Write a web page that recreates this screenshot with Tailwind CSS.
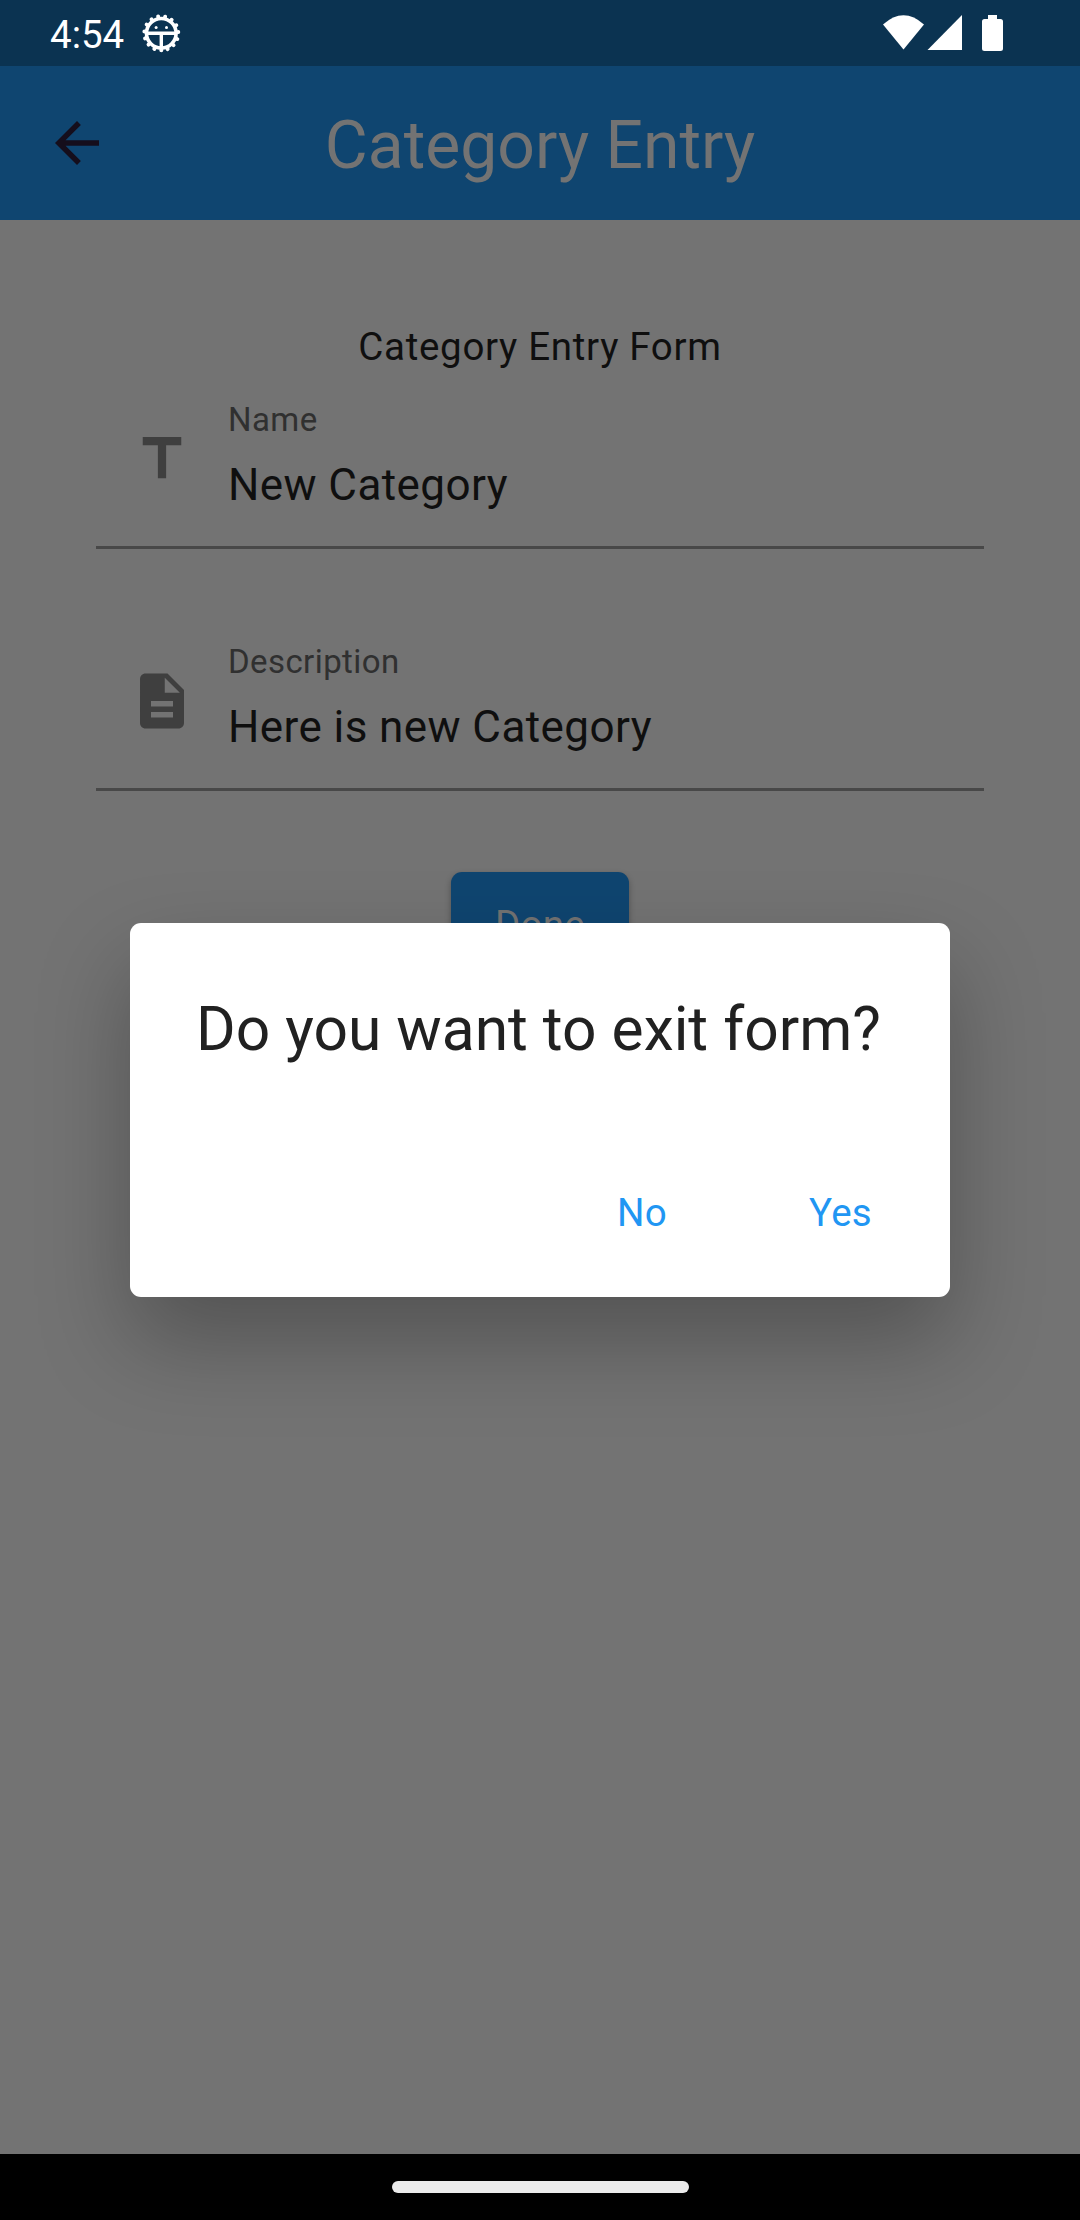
<!DOCTYPE html>
<html lang="en">
<head>
<meta charset="utf-8">
<title>Category Entry</title>
<script src="https://cdn.jsdelivr.net/npm/@tailwindcss/browser@4"></script>
</head>
<body class="bg-black font-['Roboto',sans-serif]">
<div class="relative flex h-[2220px] w-[1080px] flex-col overflow-hidden bg-[#737373]">
  <!-- Status bar -->
  <div class="flex h-[66px] shrink-0 items-center bg-[#0b3351] pl-[50px] text-white">
    <span class="w-[91px] pt-[4px] text-[38.5px] leading-[62px]">4:54</span>
    <svg class="h-[40px] w-[40px]" viewBox="-20.300 -20.300 40 40" fill="none" stroke="#fff">
      <circle r="17" stroke-width="4" stroke-linecap="round" stroke-dasharray="0.01 7.111" transform="rotate(90)"/>
      <circle r="14.800" stroke-width="3.600"/>
      <path d="M-14 0H14M0 0V15" stroke-width="3.400"/>
      <circle cx="-5.200" cy="-5.800" r="1.500" fill="#fff" stroke="none"/>
      <circle cx="5.200" cy="-5.800" r="1.500" fill="#fff" stroke="none"/>
    </svg>
    <svg class="ml-[702px] h-[36px] w-[122px]" viewBox="883 15 122 36" fill="#fff">
      <path d="M883 24.500Q903.500 6 924 24.500L903.500 49.500Z"/>
      <path d="M927.500 50L962 15V50Z"/>
      <path d="M988 15h9v4h3.500a2.500 2.500 0 0 1 2.500 2.500v27a2.500 2.500 0 0 1-2.500 2.500h-16a2.500 2.500 0 0 1-2.500-2.500v-27a2.500 2.500 0 0 1 2.500-2.500h3.500z"/>
    </svg>
  </div>
  <!-- App bar -->
  <header class="flex h-[154px] shrink-0 items-center bg-[#0f4570] px-[44px]">
    <svg class="h-[66px] w-[66px]" viewBox="0 0 24 24" fill="#150e1c"><path d="M20 11H7.830l5.590-5.590L12 4l-8 8 8 8 1.410-1.410L7.830 13H20z"/></svg>
    <h1 class="mr-[66px] flex-1 pt-[6px] text-center text-[66px] leading-[78px] text-[#737373]">Category Entry</h1>
  </header>
  <!-- Form -->
  <main class="flex flex-1 flex-col items-center px-[96px] pt-[103px]">
    <h2 class="h-[48px] text-[38.5px] leading-[48px] tracking-[0.6875px] text-[#0f0f0f]">Category Entry Form</h2>
    <div class="flex h-[178px] w-full border-b-[3px] border-[#484848] pl-[33px]">
      <svg class="mt-[55px] h-[66px] w-[66px] shrink-0" viewBox="0 0 24 24" fill="#3f3f3f"><path d="M5 4v3h5.500v12h3V7H19V4z"/></svg>
      <div class="ml-[33px] flex flex-col">
        <label class="mt-[29px] text-[33px] leading-[40px] tracking-[0.4125px] text-[#303030]">Name</label>
        <span class="mt-[19px] text-[44px] leading-[52px] tracking-[0.4125px] text-[#0f0f0f]">New Category</span>
      </div>
    </div>
    <div class="mt-[64px] flex h-[178px] w-full border-b-[3px] border-[#484848] pl-[33px]">
      <svg class="mt-[55px] h-[66px] w-[66px] shrink-0" viewBox="0 0 24 24" fill="#3f3f3f"><path d="M14 2H6c-1.100 0-1.990.9-1.990 2L4 20c0 1.100.890 2 1.990 2H18c1.100 0 2-.9 2-2V8l-6-6zm2 16H8v-2h8v2zm0-4H8v-2h8v2zm-3-5V3.500L18.500 9H13z"/></svg>
      <div class="ml-[33px] flex flex-col">
        <label class="mt-[29px] text-[33px] leading-[40px] tracking-[0.4125px] text-[#303030]">Description</label>
        <span class="mt-[19px] text-[44px] leading-[52px] tracking-[0.4125px] text-[#0f0f0f]">Here is new Category</span>
      </div>
    </div>
    <button class="mt-[81px] h-[104px] w-[178px] rounded-[11px] bg-[#0f4570] pt-[2px] text-[38.5px] leading-[102px] tracking-[0.275px] text-[#737373] shadow-[0_3px_6px_rgba(0,0,0,0.3)]">Done</button>
  </main>
  <!-- Navigation bar -->
  <div class="flex h-[66px] shrink-0 items-center justify-center bg-black">
    <div class="h-[12px] w-[297px] rounded-full bg-[#ebebeb]"></div>
  </div>
  <!-- Exit dialog -->
  <div role="dialog" class="absolute top-[923px] left-[130px] flex h-[374px] w-[820px] flex-col rounded-[11px] bg-white px-[66px] pt-[67px] shadow-[0_44px_92px_rgba(0,0,0,0.28)]">
    <p class="text-[60.5px] leading-[80px] whitespace-nowrap text-[#212121]">Do you want to exit form?</p>
    <div class="mt-[117px] flex justify-end gap-[142px] pr-[12px] text-[38.5px] leading-[52px] tracking-[0.275px] text-[#2196f3]">
      <button>No</button>
      <button>Yes</button>
    </div>
  </div>
</div>
</body>
</html>
